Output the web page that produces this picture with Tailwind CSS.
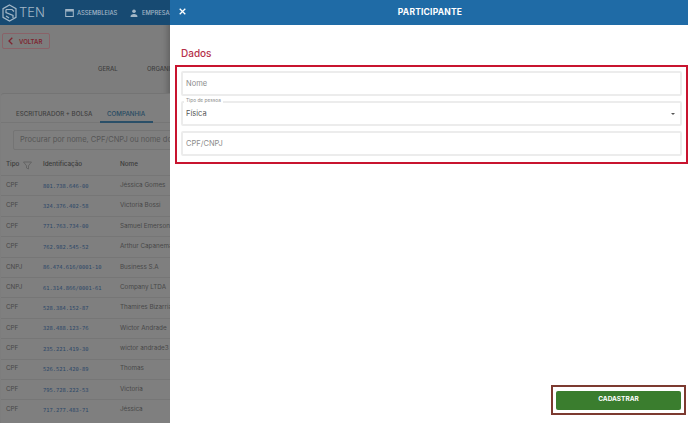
<!DOCTYPE html>
<html lang="pt">
<head>
<meta charset="utf-8">
<title>Participante</title>
<script src="https://cdn.jsdelivr.net/npm/@tailwindcss/browser@4"></script>
</head>
<body class="m-0 overflow-hidden font-['Inter','Liberation_Sans',sans-serif]">
<div class="flex h-[423px] w-[688px] overflow-hidden bg-white">
  <!-- dimmed page behind the drawer -->
  <div class="relative flex h-full w-[170px] shrink-0 flex-col overflow-hidden bg-[#7d7d7d] shadow-[inset_-6px_0_6px_-4px_rgba(0,0,0,0.25)]">
    <div class="flex h-[25px] shrink-0 items-center overflow-hidden bg-[#174a72] pl-[2px] text-[#a3b7c7]">
      <svg class="h-[18px] w-[15px] shrink-0" viewBox="0 0 15 18" fill="none" stroke="currentColor" stroke-width="1.2"><path d="M7.5 1 14 4.700v8.600L7.500 17 1 13.300V4.700Z"/><path d="M4 5.500h6l2 2M4 5.500v3l7 3v2.500M4 12l3 2"/></svg>
      <span class="ml-[2px] w-[27px] shrink-0 text-[13px] leading-none font-light">TEN</span>
      <svg class="ml-[19px] h-[9px] w-[9px] shrink-0" viewBox="0 0 9 9" fill="none" stroke="currentColor"><rect x="0.700" y="1.500" width="7.600" height="7" /><path d="M.7 2.800h7.600" stroke-width="1.500"/></svg>
      <span class="ml-[3px] w-[43px] shrink-0 text-[5.800px] leading-none font-medium whitespace-nowrap">ASSEMBLEIAS</span>
      <svg class="ml-[10px] h-[8px] w-[8px] shrink-0" viewBox="0 0 8 8" fill="currentColor"><circle cx="4" cy="2.200" r="1.800"/><path d="M.5 8c0-2.300 1.500-3 3.500-3s3.500.7 3.500 3Z"/></svg>
      <span class="ml-[4px] shrink-0 text-[5.800px] leading-none font-medium whitespace-nowrap">EMPRESAS</span>
    </div>
    <div class="pt-[8px] pl-[2px]">
      <div class="flex h-[16px] w-[48px] items-center rounded-[2px] border border-[#8a6268] pl-[5px] text-[#7d2530]">
        <svg class="h-[8px] w-[5px] shrink-0" viewBox="0 0 5 8" fill="none" stroke="currentColor" stroke-width="1.300"><path d="M4.300.7 1 4l3.300 3.300"/></svg>
        <span class="ml-[6px] text-[6px] font-semibold">VOLTAR</span>
      </div>
    </div>
    <div class="mt-[13px] flex h-[12px] shrink-0 items-center pl-[98px] text-[6px] font-medium whitespace-nowrap text-[#3d3d3d]">
      <span class="w-[49px] shrink-0">GERAL</span><span>ORGANIZAÇÃO</span>
    </div>
    <div class="mt-[19px] ml-[1px] flex flex-1 flex-col rounded-tl-[3px] border-t border-[#747474] bg-[#7f7f7f] pt-[11px]">
      <div class="flex h-[18px] shrink-0 border-b border-[#767676] pl-[15px] text-[6.200px] font-medium whitespace-nowrap">
        <span class="w-[84px] shrink-0 pt-[4px] text-[#404040]">ESCRITURADOR + BOLSA</span>
        <span class="h-[18px] w-[53px] shrink-0 border-b-[2px] border-[#2a4f68] pt-[4px] pl-[7px] text-[#264a62]">COMPANHIA</span>
      </div>
      <div class="mt-[7px] ml-[12px] flex h-[20px] w-[200px] shrink-0 items-center rounded-[2px] border border-[#747474] pl-[6px] text-[7.500px] whitespace-nowrap text-[#565656]">Procurar por nome, CPF/CNPJ ou nome do representante</div>
      <div class="mt-[5px] flex h-[20px] shrink-0 items-center pl-[5px] text-[6.300px] font-medium text-[#3a3a3a]">
        <span class="flex w-[37px] shrink-0 items-center">Tipo<svg class="ml-[4px] h-[9px] w-[9px]" viewBox="0 0 9 9" fill="none" stroke="#5a5a5a" stroke-width="0.700"><path d="M.5 1h8L5.500 4.800V8L3.500 7V4.800Z"/></svg></span>
        <span class="w-[77px] shrink-0">Identificação</span><span>Nome</span>
      </div>
      <div class="flex flex-col text-[6.300px] whitespace-nowrap text-[#484848]">
        <div class="flex h-[20.400px] items-center border-t border-[#767676] pl-[5px]"><span class="w-[37px] shrink-0">CPF</span><span class="w-[77px] shrink-0 font-['DejaVu_Sans_Mono',monospace] text-[5.400px] text-[#2a4668]">801.738.646-00</span><span>Jéssica Gomes</span></div>
        <div class="flex h-[20.400px] items-center border-t border-[#767676] pl-[5px]"><span class="w-[37px] shrink-0">CPF</span><span class="w-[77px] shrink-0 font-['DejaVu_Sans_Mono',monospace] text-[5.400px] text-[#2a4668]">324.376.402-58</span><span>Victoria Bossi</span></div>
        <div class="flex h-[20.400px] items-center border-t border-[#767676] pl-[5px]"><span class="w-[37px] shrink-0">CPF</span><span class="w-[77px] shrink-0 font-['DejaVu_Sans_Mono',monospace] text-[5.400px] text-[#2a4668]">771.763.734-00</span><span>Samuel Emerson</span></div>
        <div class="flex h-[20.400px] items-center border-t border-[#767676] pl-[5px]"><span class="w-[37px] shrink-0">CPF</span><span class="w-[77px] shrink-0 font-['DejaVu_Sans_Mono',monospace] text-[5.400px] text-[#2a4668]">762.982.545-52</span><span>Arthur Capanema</span></div>
        <div class="flex h-[20.400px] items-center border-t border-[#767676] pl-[5px]"><span class="w-[37px] shrink-0">CNPJ</span><span class="w-[77px] shrink-0 font-['DejaVu_Sans_Mono',monospace] text-[5.400px] text-[#2a4668]">86.474.616/0001-10</span><span>Business S.A</span></div>
        <div class="flex h-[20.400px] items-center border-t border-[#767676] pl-[5px]"><span class="w-[37px] shrink-0">CNPJ</span><span class="w-[77px] shrink-0 font-['DejaVu_Sans_Mono',monospace] text-[5.400px] text-[#2a4668]">61.314.866/0001-61</span><span>Company LTDA</span></div>
        <div class="flex h-[20.400px] items-center border-t border-[#767676] pl-[5px]"><span class="w-[37px] shrink-0">CPF</span><span class="w-[77px] shrink-0 font-['DejaVu_Sans_Mono',monospace] text-[5.400px] text-[#2a4668]">528.384.152-87</span><span>Thamires Bizarria</span></div>
        <div class="flex h-[20.400px] items-center border-t border-[#767676] pl-[5px]"><span class="w-[37px] shrink-0">CPF</span><span class="w-[77px] shrink-0 font-['DejaVu_Sans_Mono',monospace] text-[5.400px] text-[#2a4668]">328.488.123-76</span><span>Wictor Andrade</span></div>
        <div class="flex h-[20.400px] items-center border-t border-[#767676] pl-[5px]"><span class="w-[37px] shrink-0">CPF</span><span class="w-[77px] shrink-0 font-['DejaVu_Sans_Mono',monospace] text-[5.400px] text-[#2a4668]">235.221.419-30</span><span>wictor andrade3</span></div>
        <div class="flex h-[20.400px] items-center border-t border-[#767676] pl-[5px]"><span class="w-[37px] shrink-0">CPF</span><span class="w-[77px] shrink-0 font-['DejaVu_Sans_Mono',monospace] text-[5.400px] text-[#2a4668]">526.521.420-89</span><span>Thomas</span></div>
        <div class="flex h-[20.400px] items-center border-t border-[#767676] pl-[5px]"><span class="w-[37px] shrink-0">CPF</span><span class="w-[77px] shrink-0 font-['DejaVu_Sans_Mono',monospace] text-[5.400px] text-[#2a4668]">795.728.222-53</span><span>Victoria</span></div>
        <div class="flex h-[20.400px] items-center border-t border-[#767676] pl-[5px]"><span class="w-[37px] shrink-0">CPF</span><span class="w-[77px] shrink-0 font-['DejaVu_Sans_Mono',monospace] text-[5.400px] text-[#2a4668]">717.277.483-71</span><span>Jéssica</span></div>
      </div>
    </div>
  </div>

  <!-- drawer -->
  <div class="flex h-full min-w-0 flex-1 flex-col bg-white">
    <div class="relative flex h-[25px] shrink-0 items-center justify-center bg-[#1f6ba6] pl-[2px]">
      <svg class="absolute top-[8px] left-[9px] h-[7px] w-[7px]" viewBox="0 0 7 7" fill="none" stroke="white" stroke-width="1.300"><path d="m.7.7 5.600 5.600M6.300.7.700 6.300"/></svg>
      <span class="text-[8.500px] font-bold tracking-[0.2px] text-white">PARTICIPANTE</span>
    </div>
    <div class="px-[11px] pt-[22px] text-[10px] leading-[13px] font-medium text-[#b5304a]">Dados</div>
    <div class="mt-[5px] ml-[5px] flex h-[99px] w-[513px] flex-col gap-[5px] border-2 border-[#c8142f] px-[4px] pt-[4px]">
      <div class="flex h-[25px] w-[501px] shrink-0 items-center rounded-[2px] border-2 border-[#ececec] pl-[3px] text-[7.500px] text-[#8c8c8c]">Nome</div>
      <div class="relative flex h-[25px] w-[501px] shrink-0 items-center justify-between rounded-[2px] border-2 border-[#ececec] pr-[5px] pl-[3px] text-[7.500px] text-[#555]">
        <span class="absolute top-[-6px] left-[1px] bg-white px-[2px] text-[4.800px] leading-[7px] text-[#8c8c8c]">Tipo de pessoa</span>
        <span>Física</span>
        <span class="h-0 w-0 border-x-[2.500px] border-t-[2.500px] border-x-transparent border-t-[#555]"></span>
      </div>
      <div class="flex h-[25px] w-[501px] shrink-0 items-center rounded-[2px] border-2 border-[#ececec] pl-[3px] text-[7.500px] text-[#8c8c8c]">CPF/CNPJ</div>
    </div>
    <div class="mt-auto mr-[2px] mb-[8px] ml-auto flex h-[30px] w-[135px] items-center justify-center border-2 border-[#7c3a30]">
      <div class="flex h-[19px] w-[125px] items-center justify-center rounded-[2px] bg-[#3a7d2e] text-[6.500px] font-bold text-white">CADASTRAR</div>
    </div>
  </div>
</div>
</body>
</html>
